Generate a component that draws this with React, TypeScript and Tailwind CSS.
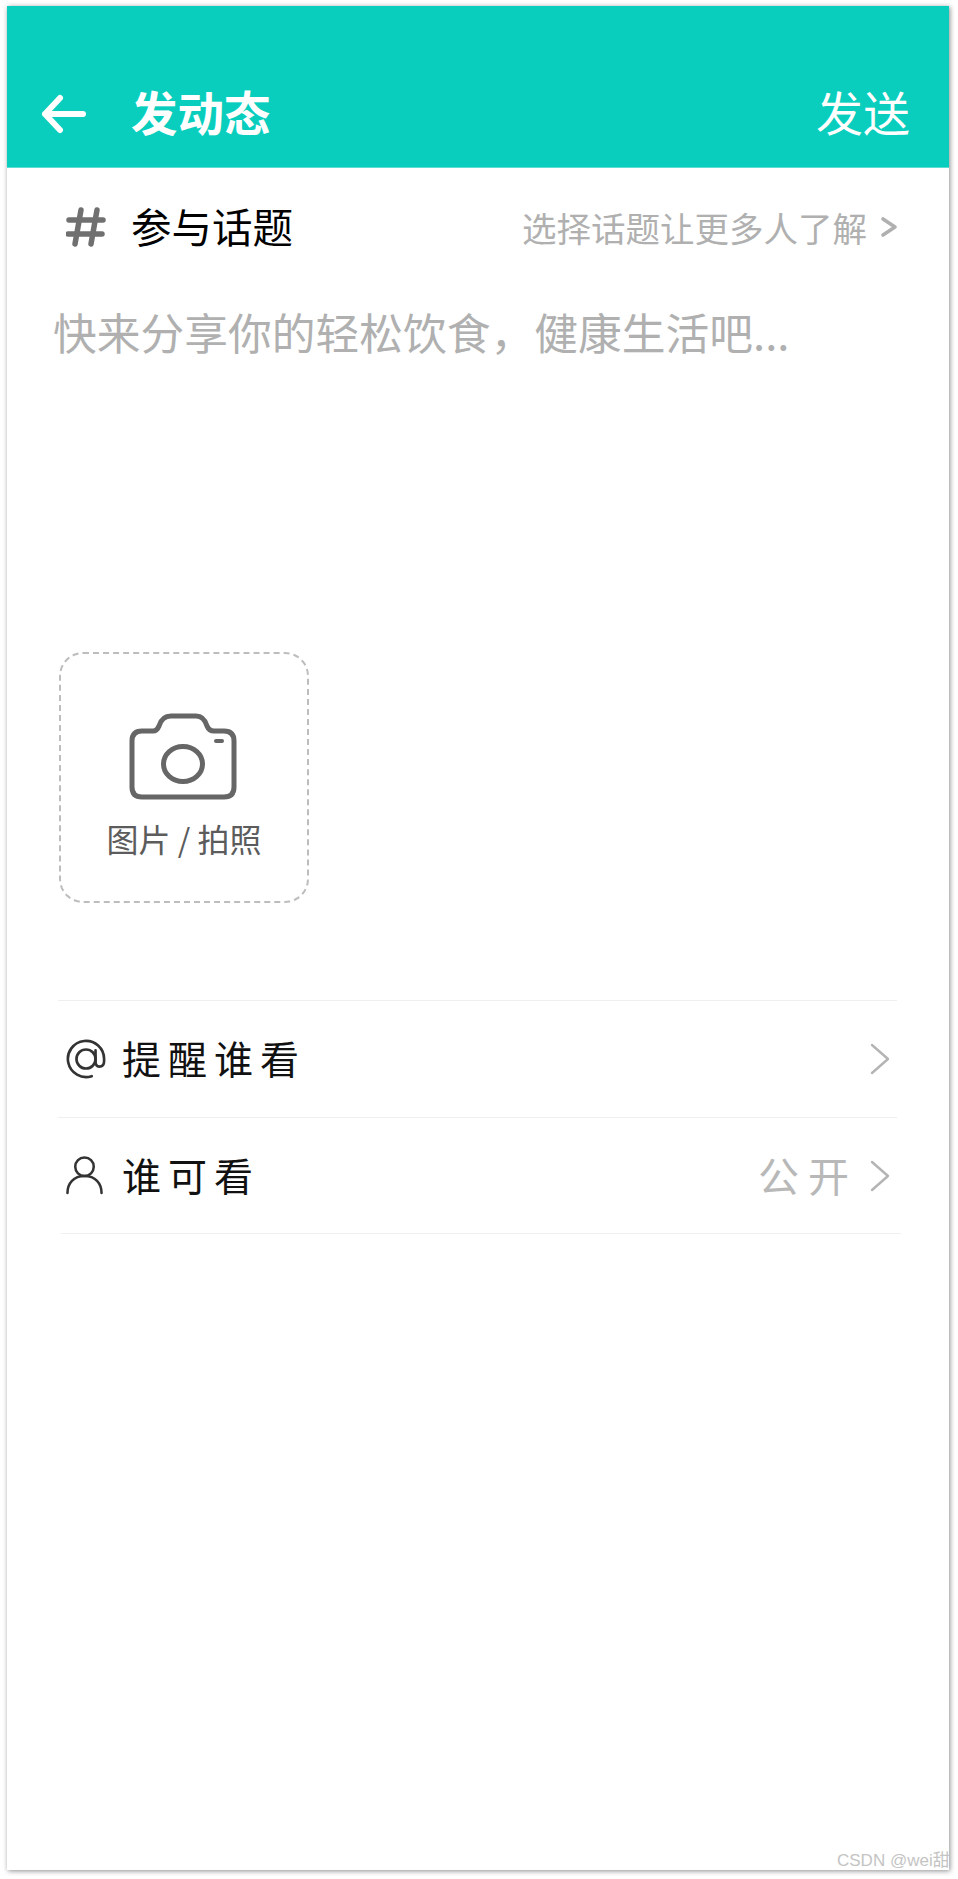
const cjk = "font-['Noto_Sans_CJK_SC','Noto_Sans',sans-serif]";

function Chevron() {
  return (
    <svg width="20" height="32" viewBox="0 0 20 32" fill="none" stroke="#b4b4b4" strokeWidth="2.4" strokeLinecap="round" strokeLinejoin="round">
      <path d="M2 2 L18 16 L2 30" />
    </svg>
  );
}

export default function App() {
  return (
    <div className={`${cjk} relative min-h-[1879px] bg-white pt-[6px] pl-[7px]`}>
      <div className="flex h-[1864px] w-[942px] flex-col bg-white shadow-[1px_1px_5px_rgba(0,0,0,0.45)]">
        {/* Header */}
        <div className="flex h-[162px] shrink-0 items-end justify-between border-b border-[#5fdccf] bg-[#09cebd] pr-[39px] pb-[26px] pl-[34px] text-white">
          <div className="flex items-center">
            <svg className="relative top-[3px]" width="46" height="40" viewBox="0 0 46 40" fill="none" stroke="white" strokeWidth="6" strokeLinecap="round" strokeLinejoin="round">
              <path d="M4 20 H42 M19 4 L4 20 L19 36" />
            </svg>
            <span className="ml-[44px] text-[46.5px] leading-[60px] font-bold">发动态</span>
          </div>
          <span className="text-[47px] leading-[60px]">发送</span>
        </div>

        {/* Topic row */}
        <div className="flex h-[117px] shrink-0 items-center justify-between pr-[51px] pl-[59px]">
          <div className="flex items-center">
            <svg width="40" height="40" viewBox="0 0 40 40" fill="none" stroke="#707070" strokeWidth="5.5" strokeLinecap="round">
              <path d="M15 3 L9 37 M31 3 L25 37 M3 13 H37 M2 27 H36" />
            </svg>
            <span className="mb-[2px] ml-[25px] text-[40.5px] leading-[56px] text-black">参与话题</span>
          </div>
          <div className="flex items-center text-[#b0b0b0]">
            <span className="text-[34.5px] leading-[50px]">选择话题让更多人了解</span>
            <svg className="ml-[13px]" width="18" height="22" viewBox="0 0 18 22" fill="none" stroke="#b0b0b0" strokeWidth="3.6" strokeLinecap="round" strokeLinejoin="round">
              <path d="M3 3 L15 11 L3 19" />
            </svg>
          </div>
        </div>

        {/* Placeholder */}
        <div className="mt-[16px] pl-[46px] text-[43.75px] leading-[60px] text-[#b0b0b0]">
          快来分享你的轻松饮食，健康生活吧...
        </div>

        {/* Photo picker */}
        <div className="mt-[291px] ml-[52px] flex h-[251px] w-[250px] flex-col items-center rounded-[24px] border-2 border-dashed border-[#bdbdbd] pt-[58px]">
          <svg width="110" height="90" viewBox="0 0 110 90" fill="none" stroke="#666666" strokeWidth="5" strokeLinecap="round" strokeLinejoin="round">
            <path d="M13 19 H24 Q28 19 30 14 Q33 4 42 4 H67 Q75 4 78 14 Q80 19 85 19 H95 Q105 19 105 29 V75 Q105 85 95 85 H13 Q3 85 3 75 V29 Q3 19 13 19 Z" />
            <ellipse cx="54" cy="52" rx="19.5" ry="17.5" />
            <path d="M87 29 H93" strokeWidth="4" />
          </svg>
          <span className="mt-[14px] text-[32px] leading-[44px] whitespace-pre text-[#5c5c5c]">图片 / 拍照</span>
        </div>

        {/* Options */}
        <div className="mt-[97px] ml-[51px] w-[839px] border-t border-[#efefef]">
          <div className="flex h-[117px] items-center justify-between border-b border-[#efefef] pr-[7px] pl-[8px]">
            <div className="flex items-center">
              <svg width="40" height="40" viewBox="0 0 42 42" fill="none" stroke="#333333" strokeWidth="2.8" strokeLinecap="round">
                <path d="M27 39 A19 19 0 1 1 40 21 V23 Q40 29 35 29 Q31 29 31 24 V12" />
                <circle cx="21" cy="21" r="10" />
              </svg>
              <span className="mb-[4px] ml-[16px] text-[39px] leading-[54px] tracking-[7px] text-[#111111]">提醒谁看</span>
            </div>
            <Chevron />
          </div>
        </div>
        <div className="ml-[54px] w-[840px] border-b border-[#efefef]">
          <div className="flex h-[115px] items-center justify-between pr-[11px] pl-[5px]">
            <div className="flex items-center">
              <svg width="37" height="39" viewBox="0 0 38 40" fill="none" stroke="#333333" strokeWidth="2.6" strokeLinecap="round">
                <circle cx="19" cy="11" r="9.5" />
                <path d="M1.5 38 C1.5 28 8 20.5 19 20.5 C30 20.5 36.5 28 36.5 38" />
              </svg>
              <span className="mb-[4px] ml-[19px] text-[39px] leading-[54px] tracking-[7px] text-[#111111]">谁可看</span>
            </div>
            <div className="flex items-center">
              <span className="mb-[4px] text-[41px] leading-[54px] tracking-[9px] text-[#b8b8b8]">公开</span>
              <span className="ml-[12px] flex">
                <Chevron />
              </span>
            </div>
          </div>
        </div>
      </div>

      {/* Watermark */}
      <div className="absolute top-[1851px] left-[837px] font-['Liberation_Sans','Noto_Sans_CJK_SC',sans-serif] text-[17px] leading-[20px] whitespace-nowrap text-[#c4c4c4]">
        CSDN @wei甜
      </div>
    </div>
  );
}
